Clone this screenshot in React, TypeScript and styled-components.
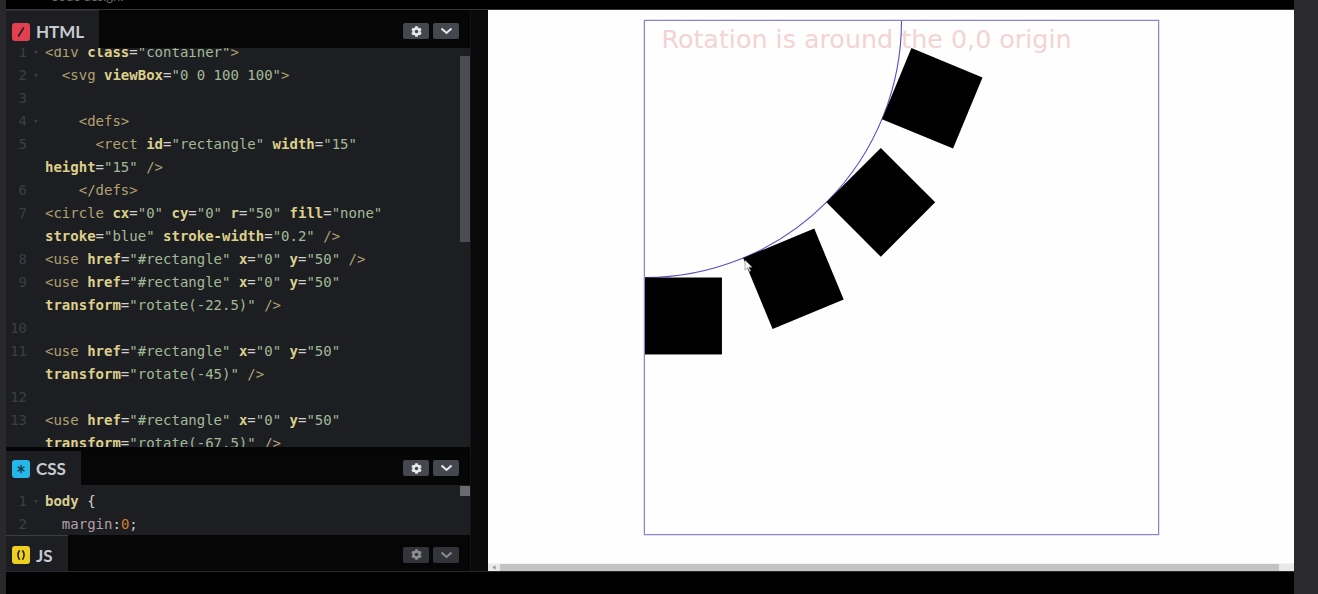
import React from "react";
import styled, { createGlobalStyle } from "styled-components";
import { FaCog } from "react-icons/fa";

const Global = createGlobalStyle`
  html, body { margin: 0; padding: 0; background: #000; }
  body { width: 1318px; height: 594px; overflow: hidden; font-family: Lato, "Open Sans", sans-serif; }
  * { box-sizing: border-box; }
`;

const Screen = styled.div`
  width: 1318px;
  height: 594px;
  display: flex;
  background: #000;
  overflow: hidden;
`;

const EdgeStrip = styled.div<{ w: number; bg: string }>`
  width: ${(p) => p.w}px;
  flex: none;
  background: ${(p) => p.bg};
`;

const Main = styled.div`
  flex: 1;
  min-width: 0;
  display: flex;
  flex-direction: column;
`;

const TopBar = styled.div`
  height: 10px;
  flex: none;
  border-bottom: 1px solid #353535;
  background: #000;
  overflow: hidden;
  padding-left: 44px;
  color: #6a6a6a;
  font: 13px/13px Lato, sans-serif;
`;

const TopText = styled.div`
  margin-top: -10px;
`;

const Workspace = styled.div`
  height: 561px;
  flex: none;
  display: flex;
`;

const BottomBar = styled.div`
  height: 23px;
  flex: none;
  background: #000;
  border-top: 1px solid #2a2a2a;
`;

const Editors = styled.div`
  width: 464px;
  flex: none;
  display: flex;
  flex-direction: column;
  background: #050505;
`;

const PanelHeader = styled.div<{ h: number }>`
  height: ${(p) => p.h}px;
  flex: none;
  display: flex;
  align-items: stretch;
  justify-content: space-between;
  background: #060606;
  padding-right: 11px;
`;

const Tab = styled.div<{ line?: string; pt?: number }>`
  display: flex;
  align-items: center;
  gap: 6px;
  padding: ${(p) => p.pt ?? 0}px 15px 0 6px;
  background: #1d1e22;
  border-top: 1px solid ${(p) => p.line ?? "#2c2d31"};
  color: #c9cbd1;
  font-family: Lato, "Open Sans", sans-serif;
  font-weight: 700;
  font-size: 17px;
`;

const LangIcon = styled.span<{ bg: string }>`
  width: 18px;
  height: 18px;
  border-radius: 3px;
  background: ${(p) => p.bg};
  display: flex;
  align-items: center;
  justify-content: center;
  flex: none;
`;

const HeaderButtons = styled.div<{ pt?: number }>`
  display: flex;
  align-items: center;
  gap: 4px;
  padding-top: ${(p) => p.pt ?? 0}px;
`;

const IconBtn = styled.div<{ dim?: boolean }>`
  width: 26px;
  height: 16px;
  border-radius: 2px;
  background: ${(p) => (p.dim ? "#33343a" : "#45474f")};
  color: ${(p) => (p.dim ? "#8c8d93" : "#e9e9ec")};
  display: flex;
  align-items: center;
  justify-content: center;
`;

const Gap = styled.div<{ h: number }>`
  height: ${(p) => p.h}px;
  flex: none;
  background: #050505;
`;

const CodeArea = styled.div<{ h: number }>`
  height: ${(p) => p.h}px;
  flex: none;
  display: flex;
  background: #1d1e22;
  overflow: hidden;
`;

const CodeScroll = styled.div<{ offset: number }>`
  flex: 1;
  min-width: 0;
  overflow: hidden;
  padding-top: ${(p) => Math.max(p.offset, 0)}px;
`;

const Lines = styled.div<{ offset: number }>`
  margin-top: ${(p) => Math.min(p.offset, 0)}px;
`;

const Row = styled.div`
  display: flex;
  height: 23px;
  line-height: 23px;
  font-family: "DejaVu Sans Mono", "Liberation Mono", monospace;
  font-size: 14px;
  white-space: pre;
`;

const LineNo = styled.span`
  width: 21px;
  flex: none;
  text-align: right;
  color: #3c3e44;
`;

const Fold = styled.span`
  width: 18px;
  flex: none;
  padding-left: 6px;
  color: #3c3e44;
  font-size: 9px;
`;

const tokenColors: Record<string, string> = {
  tag: "#b3a070",
  attr: "#ddd08a",
  eq: "#cfcfcf",
  str: "#a3ba98",
  plain: "#cfcfcf",
  sel: "#d9cf93",
  prop: "#b59fa8",
  num: "#d47a32",
};

const Tok = styled.span<{ k: string }>`
  color: ${(p) => tokenColors[p.k]};
  font-weight: ${(p) => (p.k === "attr" || p.k === "sel" ? 700 : 400)};
`;

const VScroll = styled.div`
  width: 11px;
  flex: none;
  padding-left: 1px;
  background: #1d1e22;
`;

const Thumb = styled.div<{ top: number; h: number; color: string }>`
  margin-top: ${(p) => p.top}px;
  height: ${(p) => p.h}px;
  background: ${(p) => p.color};
`;

const Divider = styled.div`
  width: 18px;
  flex: none;
  background: #0a0a0a;
  border-left: 1px solid #141414;
`;

const Preview = styled.div`
  width: 806px;
  flex: none;
  background: #fefefe;
  display: flex;
  flex-direction: column;
`;

const Stage = styled.div`
  flex: 1;
  padding: 10px 0 0 156px;
`;

const Canvas = styled.svg`
  display: block;
  width: 515px;
  height: 515px;
  border: 1px solid #8884cd;
  box-shadow: 0 0 0 0.5px #c9c7ea;
`;

const HScroll = styled.div`
  height: 8px;
  flex: none;
  display: flex;
  align-items: stretch;
  background: #e9e9e9;
  border-top: 1px solid #f4f4f4;
`;

const ArrowCell = styled.div`
  width: 12px;
  flex: none;
  display: flex;
  align-items: center;
  justify-content: center;
`;

const HThumb = styled.div`
  width: 779px;
  flex: none;
  background: #c3c3c3;
`;

type T = [string, string];
type RowData = { n?: number; fold?: boolean; toks: T[] };

const useRow = (): T[] => [
  ["tag", "<use "],
  ["attr", "href"],
  ["eq", "="],
  ["str", '"#rectangle"'],
  ["plain", " "],
  ["attr", "x"],
  ["eq", "="],
  ["str", '"0"'],
  ["plain", " "],
  ["attr", "y"],
  ["eq", "="],
  ["str", '"50"'],
];

const transformRow = (deg: string): T[] => [
  ["attr", "transform"],
  ["eq", "="],
  ["str", `"rotate(${deg})"`],
  ["plain", " "],
  ["tag", "/>"],
];

const htmlRows: RowData[] = [
  {
    n: 1,
    fold: true,
    toks: [
      ["tag", "<div "],
      ["attr", "class"],
      ["eq", "="],
      ["str", '"container"'],
      ["tag", ">"],
    ],
  },
  {
    n: 2,
    fold: true,
    toks: [
      ["plain", "  "],
      ["tag", "<svg "],
      ["attr", "viewBox"],
      ["eq", "="],
      ["str", '"0 0 100 100"'],
      ["tag", ">"],
    ],
  },
  { n: 3, toks: [] },
  { n: 4, fold: true, toks: [["plain", "    "], ["tag", "<defs>"]] },
  {
    n: 5,
    toks: [
      ["plain", "      "],
      ["tag", "<rect "],
      ["attr", "id"],
      ["eq", "="],
      ["str", '"rectangle"'],
      ["plain", " "],
      ["attr", "width"],
      ["eq", "="],
      ["str", '"15"'],
    ],
  },
  {
    toks: [
      ["attr", "height"],
      ["eq", "="],
      ["str", '"15"'],
      ["plain", " "],
      ["tag", "/>"],
    ],
  },
  { n: 6, toks: [["plain", "    "], ["tag", "</defs>"]] },
  {
    n: 7,
    toks: [
      ["tag", "<circle "],
      ["attr", "cx"],
      ["eq", "="],
      ["str", '"0"'],
      ["plain", " "],
      ["attr", "cy"],
      ["eq", "="],
      ["str", '"0"'],
      ["plain", " "],
      ["attr", "r"],
      ["eq", "="],
      ["str", '"50"'],
      ["plain", " "],
      ["attr", "fill"],
      ["eq", "="],
      ["str", '"none"'],
    ],
  },
  {
    toks: [
      ["attr", "stroke"],
      ["eq", "="],
      ["str", '"blue"'],
      ["plain", " "],
      ["attr", "stroke-width"],
      ["eq", "="],
      ["str", '"0.2"'],
      ["plain", " "],
      ["tag", "/>"],
    ],
  },
  { n: 8, toks: [...useRow(), ["plain", " "], ["tag", "/>"]] },
  { n: 9, toks: useRow() },
  { toks: transformRow("-22.5") },
  { n: 10, toks: [] },
  { n: 11, toks: useRow() },
  { toks: transformRow("-45") },
  { n: 12, toks: [] },
  { n: 13, toks: useRow() },
  { toks: transformRow("-67.5") },
];

const cssRows: RowData[] = [
  { n: 1, fold: true, toks: [["sel", "body"], ["plain", " {"]] },
  {
    n: 2,
    toks: [
      ["plain", "  "],
      ["prop", "margin"],
      ["plain", ":"],
      ["num", "0"],
      ["plain", ";"],
    ],
  },
];

const Code = ({ rows, offset }: { rows: RowData[]; offset: number }) => (
  <CodeScroll offset={offset}>
    <Lines offset={offset}>
      {rows.map((r, i) => (
        <Row key={i}>
          <LineNo>{r.n ?? ""}</LineNo>
          <Fold>{r.fold ? "▾" : ""}</Fold>
          <span>
            {r.toks.map(([k, t], j) => (
              <Tok key={j} k={k}>
                {t}
              </Tok>
            ))}
          </span>
        </Row>
      ))}
    </Lines>
  </CodeScroll>
);

const Chevron = () => (
  <svg width="13" height="8" viewBox="0 0 13 8">
    <polyline points="1.5,1.5 6.5,6 11.5,1.5" fill="none" stroke="currentColor" strokeWidth="2" />
  </svg>
);

const Buttons = ({ dim, pt }: { dim?: boolean; pt?: number }) => (
  <HeaderButtons pt={pt}>
    <IconBtn dim={dim}>
      <FaCog size={11} />
    </IconBtn>
    <IconBtn dim={dim}>
      <Chevron />
    </IconBtn>
  </HeaderButtons>
);

const HtmlIcon = () => (
  <LangIcon bg="#e2404f">
    <svg width="18" height="18" viewBox="0 0 18 18">
      <line x1="6.5" y1="13" x2="11.5" y2="5" stroke="#1d1e22" strokeWidth="1.6" strokeLinecap="round" />
    </svg>
  </LangIcon>
);

const CssIcon = () => (
  <LangIcon bg="#26b6e7">
    <svg width="18" height="18" viewBox="0 0 18 18">
      <g stroke="#123c4c" strokeWidth="1.4" strokeLinecap="round">
        <line x1="9" y1="5.5" x2="9" y2="12.5" />
        <line x1="6" y1="7.2" x2="12" y2="10.8" />
        <line x1="6" y1="10.8" x2="12" y2="7.2" />
      </g>
    </svg>
  </LangIcon>
);

const JsIcon = () => (
  <LangIcon bg="#efcf22">
    <svg width="18" height="18" viewBox="0 0 18 18">
      <g fill="none" stroke="#2a2610" strokeWidth="1.6" strokeLinecap="round">
        <path d="M7.3 4.8 Q4.6 9 7.3 13.2" />
        <path d="M10.7 4.8 Q13.4 9 10.7 13.2" />
      </g>
    </svg>
  </LangIcon>
);

export default function App() {
  return (
    <>
      <Global />
      <Screen>
        <EdgeStrip w={6} bg="#29292c" />
        <Main>
          <TopBar>
            <TopText>Code design.</TopText>
          </TopBar>
          <Workspace>
            <Editors>
              <PanelHeader h={38}>
                <Tab pt={4}>
                  <HtmlIcon />
                  HTML
                </Tab>
                <Buttons pt={4} />
              </PanelHeader>
              <CodeArea h={399}>
                <Code rows={htmlRows} offset={-7} />
                <VScroll>
                  <Thumb top={8} h={186} color="#4b4c52" />
                </VScroll>
              </CodeArea>
              <Gap h={4} />
              <PanelHeader h={34}>
                <Tab line="#1d1e22">
                  <CssIcon />
                  CSS
                </Tab>
                <Buttons />
              </PanelHeader>
              <CodeArea h={50}>
                <Code rows={cssRows} offset={5} />
                <VScroll>
                  <Thumb top={1} h={10} color="#6a6b71" />
                </VScroll>
              </CodeArea>
              <PanelHeader h={36}>
                <Tab line="#3b3d44" pt={3}>
                  <JsIcon />
                  JS
                </Tab>
                <Buttons dim pt={3} />
              </PanelHeader>
            </Editors>
            <Divider />
            <Preview>
              <Stage>
                <Canvas viewBox="0 0 100 100">
                  <defs>
                    <rect id="rectangle" width="15" height="15" />
                  </defs>
                  <text
                    x="3.2"
                    y="5.3"
                    fontSize="4.95"
                    fill="#f3d3d3"
                    fontFamily="'DejaVu Sans', Verdana, sans-serif"
                  >
                    Rotation is around the 0,0 origin
                  </text>
                  <circle cx="0" cy="0" r="50" fill="none" stroke="#5551c6" strokeWidth="0.22" />
                  <use href="#rectangle" x="0" y="50" />
                  <use href="#rectangle" x="0" y="50" transform="rotate(-22.5)" />
                  <use href="#rectangle" x="0" y="50" transform="rotate(-45)" />
                  <use href="#rectangle" x="0" y="50" transform="rotate(-67.5)" />
                  <polygon
                    points="19.5,46.6 19.5,48.6 20,48.1 20.35,48.85 20.6,48.75 20.25,48 20.9,48"
                    fill="#f4f4f4"
                    stroke="#707070"
                    strokeWidth="0.1"
                  />
                </Canvas>
              </Stage>
              <HScroll>
                <ArrowCell>
                  <svg width="4" height="5" viewBox="0 0 4 5">
                    <polygon points="3.5,0.5 3.5,4.5 0.5,2.5" fill="#8a8a8a" />
                  </svg>
                </ArrowCell>
                <HThumb />
              </HScroll>
            </Preview>
          </Workspace>
          <BottomBar />
        </Main>
        <EdgeStrip w={24} bg="#2b2b2e" />
      </Screen>
    </>
  );
}
